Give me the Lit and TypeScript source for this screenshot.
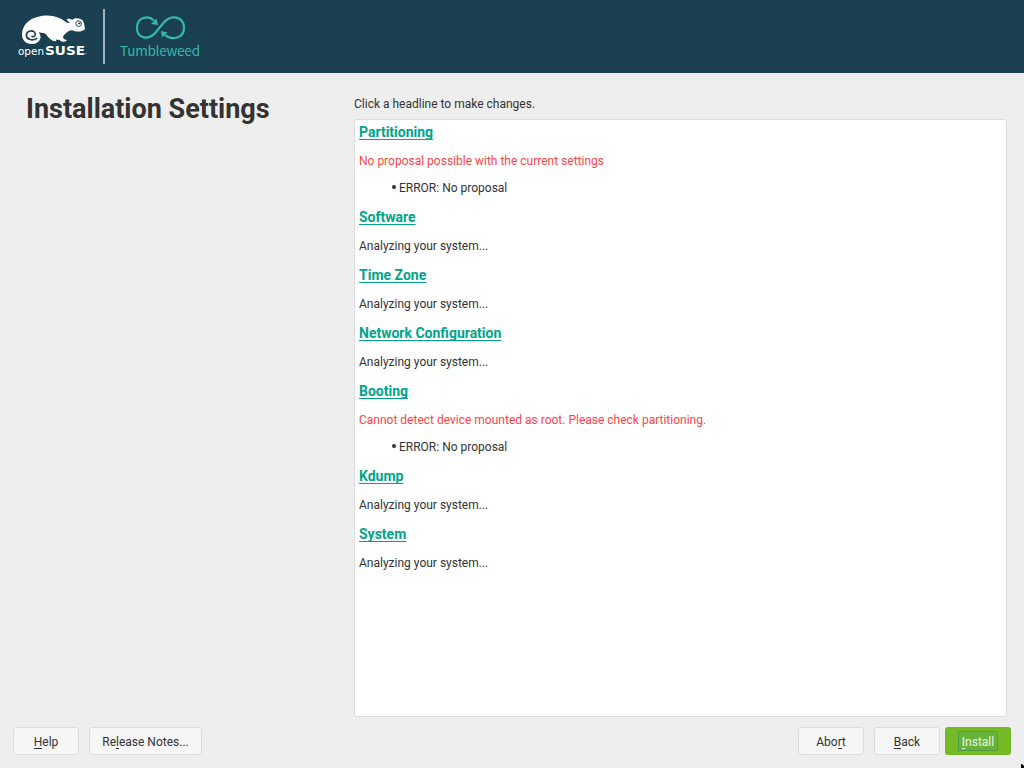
import { LitElement, html, css, nothing } from "lit";
import { customElement } from "lit/decorators.js";

interface Section {
  title: string;
  text: string;
  error?: string;
}

const PENDING = "Analyzing your system...";
const SECTIONS: Section[] = [
  { title: "Partitioning", text: "No proposal possible with the current settings", error: "ERROR: No proposal" },
  { title: "Software", text: PENDING },
  { title: "Time Zone", text: PENDING },
  { title: "Network Configuration", text: PENDING },
  { title: "Booting", text: "Cannot detect device mounted as root. Please check partitioning.", error: "ERROR: No proposal" },
  { title: "Kdump", text: PENDING },
  { title: "System", text: PENDING },
];

@customElement("app-root")
export class AppRoot extends LitElement {
  static styles = css`
    :host {
      display: flex;
      flex-direction: column;
      position: relative;
      width: 1024px;
      height: 768px;
      overflow: hidden;
      background: #eeeeee;
      color: #333333;
      font: 12px/14px Roboto, "Liberation Sans", sans-serif;
    }
    * { box-sizing: border-box; }
    header { flex: none; height: 73px; background: #193f50; }
    header svg { display: block; }
    main { flex: 1; display: grid; grid-template-columns: 354px 653px; min-height: 0; }
    h1 { margin: 19px 0 0 26px; font-size: 27px; line-height: 34px; font-weight: 700; white-space: nowrap; }
    .content { display: flex; flex-direction: column; padding-top: 24px; min-height: 0; }
    .hint { height: 22px; }
    .panel { flex: 1; background: #fff; border: 1px solid #dcdcdc; border-radius: 3px; padding: 4px; }
    h2 {
      margin: 0; height: 16px; font-size: 14px; line-height: 16px; font-weight: 700; color: #00a489;
      text-decoration: underline; text-decoration-thickness: 1px; text-underline-offset: 2px; text-decoration-skip-ink: none;
    }
    p { margin: 14px 0 12px; height: 14px; }
    .section { height: 58px; }
    .section.failed { height: 85px; }
    .failed p { color: #fb4548; margin-bottom: 13px; }
    ul { margin: 0; padding: 0 0 0 33px; list-style: none; }
    li { display: flex; align-items: center; height: 14px; gap: 3px; }
    .dot { width: 4px; height: 4px; border-radius: 50%; background: #333; margin-top: -2px; }
    footer { flex: none; height: 51px; display: flex; padding: 10px 13px 0; gap: 10px; }
    button {
      height: 28px; min-width: 66px; padding: 2px 0 0; border: 1px solid #dcdcdc; border-radius: 3px;
      background: #f6f6f6; color: inherit; font: inherit;
    }
    .notes { width: 113px; }
    .spacer { flex: 1; }
    .key { display: inline-block; height: 14px; border-bottom: 1px solid currentColor; }
    .install {
      border: 0; background: #73ba25; color: #e6f4e6; margin-left: -5px; padding: 0;
      display: flex; align-items: center; justify-content: center;
    }
    .focus { display: block; width: 40px; height: 20px; border: 1px solid #519d45; background: #67b43b; padding-top: 3px; border-radius: 1px; }
    .cursor { position: absolute; left: 1020px; top: 764px; }
    .logo { font-family: "Noto Sans CJK JP", sans-serif; }
    .wide { font-family: "DejaVu Sans", sans-serif; }
  `;

  private button(before: string, key: string, after: string, cls = "") {
    return html`<button class=${cls}>${before}<span class="key">${key}</span>${after}</button>`;
  }

  render() {
    return html`
      <header>
        <svg class="logo" width="230" height="73" viewBox="0 0 230 73">
          <g transform="translate(10 4) scale(.33333)">
            <path fill="#fff" d="M36 91C36 66 56 43 85 38C106 31 132 34 150 43C158 47 165 53 171 56L180 58C175 52 170 49 170 46C171 42 181 45 187 47C198 40 208 43 218 49L222 58L225 75C216 84 201 84 190 80C178 76 171 86 163 92C158 96 158 101 163 106L170 108C170 114 157 115 151 110C145 105 144 98 145 90L125 92C127 98 132 103 140 106L138 112C128 112 120 107 115 100C111 94 107 86 98 87C93 85 88 85 86 86C97 96 92 114 74 119C52 124 36 112 36 91Z"/>
            <path fill="#fff" d="M110 84L146 84L154 108L142 107L122 99Z"/>
            <path d="M80 103C68 112 50 107 49 94C49 82 65 77 73 84C80 92 74 101 66 97" fill="none" stroke="#193f50" stroke-width="4.800" stroke-linecap="round"/>
            <circle cx="206" cy="59" r="8.500" fill="#fff" stroke="#193f50" stroke-width="2.800"/>
            <ellipse cx="208" cy="58" rx="4" ry="2.500" fill="#193f50"/>
          </g>
          <text class="wide" x="18" y="54.600" fill="#fff" font-size="11" textLength="26" lengthAdjust="spacingAndGlyphs">open</text>
          <text class="wide" x="45" y="54.600" fill="#fff" font-weight="700" font-size="12.700" textLength="40" lengthAdjust="spacingAndGlyphs">SUSE</text>
          <circle cx="86" cy="53.500" r=".5" fill="#fff"/>
          <rect x="103" y="9" width="2" height="55" fill="#a3b2b9"/>
          <path fill="none" stroke="#35b9ab" stroke-width="2.200" d="M154 20.500C148 15 137 17 137 28C137 38.500 149 41 156 32L163 23.500C171 13 184 17 184 28C184 38 172 41 165 35"/>
          <path fill="#35b9ab" d="M156.500 18.500L158 25L151 24ZM161 31L167.500 32.500L162 37.500Z"/>
          <text x="120" y="56" fill="#35b9ab" font-size="13.5" textLength="80" lengthAdjust="spacing">Tumbleweed</text>
        </svg>
      </header>
      <main>
        <h1>Installation Settings</h1>
        <div class="content">
          <div class="hint">Click a headline to make changes.</div>
          <div class="panel">
            ${SECTIONS.map(
              (s) => html`<div class="section ${s.error ? "failed" : ""}">
                <h2>${s.title}</h2>
                <p>${s.text}</p>
                ${s.error ? html`<ul><li><span class="dot"></span>${s.error}</li></ul>` : nothing}
              </div>`
            )}
          </div>
        </div>
      </main>
      <footer>
        ${this.button("", "H", "elp")} ${this.button("Re", "l", "ease Notes...", "notes")}
        <div class="spacer"></div>
        ${this.button("Abo", "r", "t")} ${this.button("", "B", "ack")}
        <button class="install"><span class="focus"><span class="key">I</span>nstall</span></button>
      </footer>
      <svg class="cursor" width="4" height="4" viewBox="0 0 4 4"><path d="M1 0H2L4 2V4H1Z" fill="#000"/></svg>
    `;
  }
}
